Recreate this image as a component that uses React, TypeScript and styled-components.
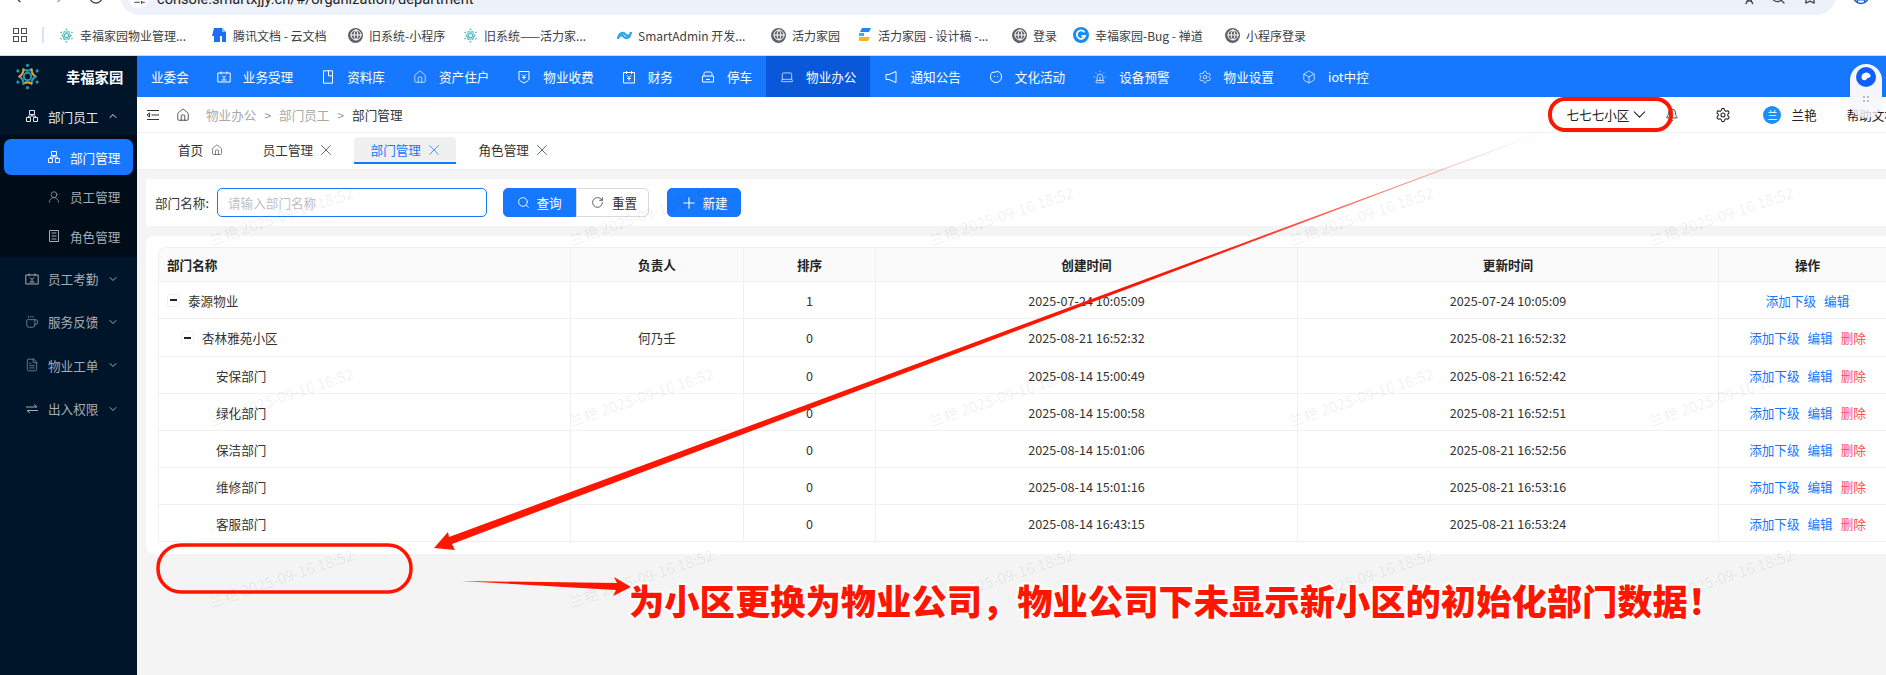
import React from "react";
import styled, { createGlobalStyle } from "styled-components";
import {
  ArrowLeft, ArrowRight, RotateCw, Search, Star, CircleUser, Globe, House, Settings, Box, Laptop, Siren, SlidersHorizontal,
  ChevronDown, ChevronUp, Bell, X, RotateCw as Reset, Plus, UserRound, Coffee, FileText, Languages,
} from "lucide-react";

const CJK = `"Noto Sans CJK SC", "Liberation Sans", sans-serif`;
const BLUE = "#1677ff";

const Global = createGlobalStyle`
  html, body { margin: 0; padding: 0; background: #fff; }
  body { font-family: ${CJK}; font-size: 12.6px; color: #222; }
  * { box-sizing: border-box; }
`;

const Page = styled.div`
  position: relative;
  width: 1886px;
  height: 675px;
  overflow: hidden;
  display: flex;
  flex-direction: column;
`;

/* browser chrome */
const BrowserBar = styled.div`
  height: 15px;
  flex: none;
  display: flex;
  align-items: flex-start;
  padding-left: 12px;
  overflow: hidden;
  color: #454746;
`;
const BrowserNav = styled.div`
  display: flex;
  gap: 22px;
  width: 108px;
  flex: none;
  margin-top: -11px;
`;
const UrlPill = styled.div`
  width: 1716px;
  height: 50px;
  margin-top: -35px;
  border-radius: 0 0 20px 20px;
  background: #edf1f9;
  display: flex;
  align-items: flex-end;
  padding: 0 18px 9px 8px;
  flex: none;
`;
const Chip = styled.span`
  width: 22px;
  height: 26px;
  border-radius: 11px;
  background: #fff;
  flex: none;
  display: flex;
  align-items: flex-end;
  justify-content: center;
  margin-bottom: -2px;
  padding-bottom: 3px;
`;
const UrlText = styled.span`
  font-family: Roboto, "Liberation Sans", sans-serif;
  font-size: 14.6px;
  line-height: 18px;
  margin-left: 7px;
  color: #1f1f1f;
  flex: 1;
  margin-bottom: -2px;
`;
const UrlTools = styled.div`
  display: flex;
  gap: 16px;
  color: #454746;
  margin-bottom: 1px;
`;
const Profile = styled.div`
  margin: -13px 0 0 16px;
  color: #1a64c8;
`;

const BookmarkBar = styled.div`
  height: 41px;
  flex: none;
  display: flex;
  align-items: center;
  border-bottom: 1px solid #d5d7da;
  padding-left: 13px;
`;
const Apps = styled.div`
  display: grid;
  grid-template-columns: 6px 6px;
  gap: 2px;
  flex: none;
`;
const AppsCell = styled.i`
  display: block;
  width: 6px;
  height: 6px;
  border: 1.4px solid #4a4a4a;
`;
const BookmarkDivider = styled.span`
  width: 2px;
  height: 16px;
  background: #d3e3fd;
  margin: 0 15px 0 15px;
  flex: none;
`;
const Bookmark = styled.div<{ $w: number }>`
  width: ${(p) => p.$w}px;
  flex: none;
  display: flex;
  align-items: center;
  gap: 6px;
  font-size: 12px;
  color: #3c4043;
  white-space: nowrap;
`;
const FavGlobe = styled.span`
  display: inline-flex;
  width: 15px;
  height: 15px;
  border-radius: 50%;
  background: #5f6368;
  color: #fff;
  align-items: center;
  justify-content: center;
  flex: none;
`;

/* shell */
const Shell = styled.div`
  flex: 1;
  display: flex;
  min-height: 0;
`;
const Sidebar = styled.aside`
  width: 137px;
  flex: none;
  background: #00152a;
  color: #a6adb4;
`;
const Brand = styled.div`
  height: 41px;
  display: flex;
  align-items: center;
  padding-left: 14px;
  gap: 25px;
  color: #fff;
  font-size: 14.3px;
  font-weight: 700;
`;
const GroupRow = styled.div<{ $open?: boolean }>`
  height: ${(p) => (p.$open ? 38 : 43.3)}px;
  display: flex;
  align-items: center;
  padding-left: 25px;
  gap: 9px;
  color: ${(p) => (p.$open ? "#e8eaec" : "#a6adb4")};
  white-space: nowrap;
`;
const GroupChevron = styled.span`
  margin-left: 0;
  display: inline-flex;
`;
const SubMenu = styled.div`
  background: #000c17;
  padding: 4px 4px 3px;
  display: flex;
  flex-direction: column;
  gap: 3.5px;
`;
const SubItem = styled.div<{ $active?: boolean }>`
  height: 36px;
  border-radius: 7px;
  display: flex;
  align-items: center;
  gap: 9px;
  padding-left: 43px;
  color: ${(p) => (p.$active ? "#fff" : "#a6adb4")};
  background: ${(p) => (p.$active ? BLUE : "transparent")};
`;

const Main = styled.main`
  flex: 1;
  min-width: 0;
  display: flex;
  flex-direction: column;
  background: #f4f4f4;
`;
const TopNav = styled.nav`
  height: 41px;
  flex: none;
  display: flex;
  background: ${BLUE};
  color: #fff;
`;
const NavItem = styled.div<{ $active?: boolean }>`
  display: flex;
  align-items: center;
  gap: 12px;
  padding: 0 14px;
  white-space: nowrap;
  background: ${(p) => (p.$active ? "#0958d9" : "transparent")};
`;
const NavIcon = styled.span`
  width: 14px;
  height: 14px;
  display: inline-flex;
  flex: none;
`;

const Crumbs = styled.div`
  height: 36px;
  flex: none;
  background: #fff;
  border-bottom: 1px solid #f0f0f0;
  display: flex;
  align-items: center;
  padding-left: 9px;
`;
const CrumbIcons = styled.div`
  display: flex;
  align-items: center;
  gap: 16px;
  margin-right: 16px;
  color: #333;
`;
const CrumbText = styled.span<{ $current?: boolean }>`
  color: ${(p) => (p.$current ? "#333" : "#a8a8a8")};
`;
const CrumbSep = styled.span`
  color: #999;
  margin: 0 8px;
  font-size: 12px;
`;
const Tools = styled.div`
  margin-left: auto;
  margin-right: -11px;
  display: flex;
  align-items: center;
  color: #222;
  white-space: nowrap;
`;
const Community = styled.div`
  display: flex;
  align-items: center;
  margin-right: 15px;
`;
const ToolGap = styled.span<{ $w: number }>`
  width: ${(p) => p.$w}px;
  flex: none;
`;
const Avatar = styled.span`
  width: 18px;
  height: 18px;
  border-radius: 50%;
  background: #1b8ff5;
  color: #fff;
  font-size: 10px;
  display: inline-flex;
  align-items: center;
  justify-content: center;
  margin-right: 10px;
`;

const Tabs = styled.div`
  height: 37px;
  flex: none;
  background: #fff;
  border-bottom: 1px solid #eee;
  display: flex;
  align-items: flex-start;
  gap: 5.5px;
  padding: 4px 0 0 24px;
`;
const Tab = styled.div<{ $active?: boolean }>`
  height: 27px;
  display: flex;
  align-items: center;
  gap: 8px;
  padding: 0 17px;
  border-radius: 4px 4px 0 0;
  color: ${(p) => (p.$active ? BLUE : "#333")};
  background: ${(p) => (p.$active ? "#f0f0f0" : "transparent")};
  border-bottom: 2px solid ${(p) => (p.$active ? BLUE : "transparent")};
  white-space: nowrap;
`;
const TabClose = styled.span`
  display: flex;
  align-items: center;
  justify-content: center;
  width: 10px;
  height: 10px;
  color: inherit;
  opacity: 0.8;
  & > svg { flex: none; }
`;

const Content = styled.div`
  flex: 1;
  min-height: 0;
  overflow: hidden;
  padding: 9px 0 0 9px;
  display: flex;
  flex-direction: column;
  gap: 10px;
`;
const SearchCard = styled.div`
  height: 47px;
  flex: none;
  background: #fff;
  display: flex;
  align-items: center;
  padding-left: 9px;
`;
const FieldLabel = styled.label`
  width: 62px;
  flex: none;
  color: #333;
`;
const FieldInput = styled.input`
  width: 270px;
  height: 29px;
  border: 1px solid ${BLUE};
  border-radius: 5px;
  outline: none;
  padding: 0 10px;
  font: inherit;
  color: #333;
  &::placeholder { color: #bfbfbf; }
`;
const ButtonGroup = styled.div`
  display: flex;
  margin-left: 16px;
`;
const Button = styled.button<{ $kind: "primary" | "plain"; $pos?: "left" | "right" }>`
  width: ${(p) => (p.$kind === "primary" && !p.$pos ? 74 : 73)}px;
  height: 29px;
  display: inline-flex;
  align-items: center;
  justify-content: center;
  gap: ${(p) => (p.$pos === "right" ? 8 : p.$pos ? 6 : 4)}px;
  padding: ${(p) => (p.$pos === "right" ? "0 0 0 3px" : "0")};
  font: inherit;
  border: 1px solid ${(p) => (p.$kind === "primary" ? BLUE : "#d9d9d9")};
  background: ${(p) => (p.$kind === "primary" ? BLUE : "#fff")};
  color: ${(p) => (p.$kind === "primary" ? "#fff" : "#333")};
  border-radius: ${(p) => (p.$pos === "left" ? "5px 0 0 5px" : p.$pos === "right" ? "0 5px 5px 0" : "5px")};
`;
const NewButton = styled(Button)`
  margin-left: 18px;
`;

const TableCard = styled.div`
  flex: none;
  background: #fff;
  border-radius: 8px 0 0 8px;
  overflow: hidden;
  padding: 11px 0 12px 12px;
`;
const Table = styled.table`
  width: 1739px;
  table-layout: fixed;
  border-collapse: separate;
  border-spacing: 0;
`;
const Th = styled.th<{ $left?: boolean }>`
  height: 35px;
  padding: 0 0 0 ${(p) => (p.$left ? 8 : 0)}px;
  background: #fafafa;
  font-weight: 700;
  color: #222;
  text-align: ${(p) => (p.$left ? "left" : "center")};
  border-top: 1px solid #f0f0f0;
  border-bottom: 1px solid #f0f0f0;
  border-right: 1px solid #f0f0f0;
  &:first-child { border-left: 1px solid #f0f0f0; border-top-left-radius: 8px; }
`;
const Tr = styled.tr<{ $tall?: boolean }>`
  height: ${(p) => (p.$tall ? 38 : 37)}px;
`;
const Td = styled.td`
  padding: 0;
  text-align: center;
  color: #333;
  border-bottom: 1px solid #f0f0f0;
  border-right: 1px solid #f0f0f0;
  &:first-child { border-left: 1px solid #f0f0f0; }
`;
const NameCell = styled.div<{ $level: number }>`
  display: flex;
  align-items: center;
  gap: 8px;
  text-align: left;
  padding-left: ${(p) => 8 + p.$level * 14}px;
`;
const Expander = styled.span`
  width: 13px;
  height: 13px;
  flex: none;
  border: 1px solid #f0f0f0;
  border-radius: 3px;
  position: relative;
  &::after {
    content: "";
    position: absolute;
    left: 2px;
    right: 2px;
    top: 4.5px;
    height: 2px;
    background: #222;
  }
`;
const LeafSpacer = styled.span`
  width: 13px;
  flex: none;
`;
const Actions = styled.div`
  display: flex;
  justify-content: center;
  gap: 8px;
`;
const ActionLink = styled.a<{ $danger?: boolean }>`
  color: ${(p) => (p.$danger ? "#ff4d4f" : BLUE)};
  text-decoration: none;
`;

/* overlays */
const FloatWidget = styled.div`
  position: absolute;
  left: 1850px;
  top: 64px;
  width: 32px;
  height: 54px;
  border-radius: 16px;
  background: linear-gradient(180deg, #f6f7fc 0 60%, rgba(246, 247, 252, 0.75) 100%);
  box-shadow: 0 1px 3px rgba(0, 0, 0, 0.06);
  display: flex;
  flex-direction: column;
  align-items: center;
  padding-top: 3px;
  z-index: 6;
`;
const DragDots = styled.div`
  display: grid;
  grid-template-columns: 2px 2px;
  gap: 2px;
  margin-top: 9px;
`;
const DragDot = styled.i`
  width: 2px;
  height: 2px;
  background: #bbb;
`;
const Watermarks = styled.div`
  position: absolute;
  left: 101px;
  top: 125px;
  display: grid;
  grid-template-columns: repeat(5, 360px);
  grid-auto-rows: 181px;
  pointer-events: none;
  z-index: 4;
`;
const Mark = styled.div`
  display: flex;
  align-items: center;
  justify-content: center;
  transform: rotate(-18.5deg);
  font-size: 15px;
  color: rgba(0, 0, 0, 0.07);
  white-space: nowrap;
`;
const Annotations = styled.svg`
  position: absolute;
  left: 0;
  top: 0;
  z-index: 5;
  pointer-events: none;
`;
const Callout = styled.div`
  position: absolute;
  left: 629px;
  top: 577px;
  z-index: 5;
  font-size: 35.3px;
  line-height: 46px;
  font-weight: 900;
  color: #ff1500;
  white-space: nowrap;
  -webkit-text-stroke: 4px #fff;
  paint-order: stroke fill;
`;

/* drawings */
const Flower = ({ size, pale }: { size: number; pale?: boolean }) => {
  const teal = pale ? "#4fb6c4" : "#1f9dac";
  const gold = pale ? "#7ec9b8" : "#d9a233";
  const angles = [0, 60, 120, 180, 240, 300];
  return (
    <svg width={size} height={size} viewBox="0 0 40 40" style={{ flex: "none" }}>
      <circle cx="20" cy="20" r="5.5" fill="none" stroke={teal} strokeWidth="3" />
      {angles.map((a, i) => (
        <g key={a} transform={`rotate(${a} 20 20)`}>
          <path d="M14 9.5 Q20 13 26 9.5" fill="none" stroke={i % 2 ? gold : teal} strokeWidth="3.2" strokeLinecap="round" />
          <circle cx="20" cy="3.5" r="2.3" fill={teal} />
        </g>
      ))}
    </svg>
  );
};

const Thin = ({ d }: { d: string }) => (
  <svg width="14" height="14" viewBox="0 0 14 14" fill="none" stroke="currentColor" strokeWidth="1" style={{ flex: "none" }}>
    <path d={d} />
  </svg>
);
const navPaths: Record<string, string> = {
  business: "M.8 3h12.400v9H.8zM4 1.500V4M10 1.500V4M5 5.500l2 2 2-2M7 7.500v2M4.500 10h5",
  library: "M2.500 .8h9v12.400h-9zM7.500 .8v5h4",
  fee: "M2 1.500h10v7.500c0 1.500-3 3-5 4-2-1-5-2.500-5-4zM5 4.500l2 2 2-2M7 6.500v3M5.200 7.500h3.600",
  finance: "M1.500 2.500h11v10.500h-11zM4.500 1v3M9.500 1v3M5 5.500l2 2 2-2M7 7.500v3M5.200 8.500h3.600",
  park: "M3 6V3.500C3 2.500 3.800 2 4.500 2h5c.8 0 1.500.5 1.500 1.500V6M1.500 6h11v6h-11zM5 9.500h4",
  culture: "M3 2.500 9 1.500c2.500 1 3.500 3 3.500 5.500a5.500 5.500 0 0 1-11 0c0-1.800.5-3.500 1.500-4.500zM5.500 6v.8M8.500 6v.8",
  notice: "M12 1.500v11L5 9.500H2v-5h3z",
  org: "M4.500 1.500h5v4h-5zM1.500 8.500h4v4h-4zM8.500 8.500h4v4h-4zM7 5.500v1.500M3.500 8.500V7h7v1.500",
  role: "M2.500 1.500h9v11h-9zM4.500 4h5M4.500 7h5M4.500 10h5",
  fold: "M1 2.500h12M5.500 7H13M1 11.500h12M3.500 5 1 7l2.500 2z",
  swap: "M1 5h11L9 2.500M13 8.500H2L5 11",
};

const navItems = [
  { label: "业委会" },
  { label: "业务受理", path: "business" },
  { label: "资料库", path: "library" },
  { label: "资产住户", icon: <House size={14} strokeWidth={1.2} /> },
  { label: "物业收费", path: "fee" },
  { label: "财务", path: "finance" },
  { label: "停车", path: "park" },
  { label: "物业办公", icon: <Laptop size={14} strokeWidth={1.2} />, active: true },
  { label: "通知公告", path: "notice" },
  { label: "文化活动", path: "culture" },
  { label: "设备预警", icon: <Siren size={14} strokeWidth={1.2} /> },
  { label: "物业设置", icon: <Settings size={14} strokeWidth={1.2} /> },
  { label: "iot中控", icon: <Box size={14} strokeWidth={1.2} /> },
];

const G = () => (
  <FavGlobe>
    <Globe size={12} strokeWidth={2} />
  </FavGlobe>
);
const bookmarks: { w: number; text: string; icon: React.ReactNode }[] = [
  { w: 153, text: "幸福家园物业管理...", icon: <Flower size={15} pale /> },
  {
    w: 136,
    text: "腾讯文档 - 云文档",
    icon: (
      <svg width="15" height="16" viewBox="0 0 15 16">
        <path d="M2 1h8l4 4v10h-4V9H8v6H2V9H0z" fill="#1b6ff0" />
        <path d="M10 1l4 4h-4z" fill="#8fc0ff" />
      </svg>
    ),
  },
  { w: 115, text: "旧系统-小程序", icon: <G /> },
  { w: 154, text: "旧系统——活力家...", icon: <Flower size={15} pale /> },
  {
    w: 154,
    text: "SmartAdmin 开发...",
    icon: (
      <svg width="15" height="15" viewBox="0 0 15 15" fill="none" stroke="#2fa8e8" strokeWidth="2.400">
        <path d="M2 9c0-4 4-5 6-3l1 1c2 2 5 0 5-3M13 6c0 4-4 5-6 3L6 8C4 6 1 8 1 11" />
      </svg>
    ),
  },
  { w: 87, text: "活力家园", icon: <G /> },
  {
    w: 154,
    text: "活力家园 - 设计稿 -...",
    icon: (
      <svg width="14" height="16" viewBox="0 0 14 16">
        <path d="M4 1h9l-2 4H2z" fill="#2484f2" />
        <path d="M1 6h5v3H1z" fill="#2bb4f0" />
        <path d="M1 10h11l-2 4H1z" fill="#f8b51d" />
      </svg>
    ),
  },
  { w: 61, text: "登录", icon: <G /> },
  {
    w: 152,
    text: "幸福家园-Bug - 禅道",
    icon: (
      <svg width="16" height="16" viewBox="0 0 16 16">
        <circle cx="8" cy="8" r="8" fill="#1a8cf0" />
        <path d="M11.500 5.200A4.200 4.200 0 1 0 12 9H8.500" fill="none" stroke="#fff" strokeWidth="1.800" />
      </svg>
    ),
  },
  { w: 100, text: "小程序登录", icon: <G /> },
];

const rows = [
  { name: "泰源物业", level: 0, fold: true, owner: "", sort: 1, created: "2025-07-24 10:05:09", updated: "2025-07-24 10:05:09", del: false },
  { name: "杏林雅苑小区", level: 1, fold: true, owner: "何乃壬", sort: 0, created: "2025-08-21 16:52:32", updated: "2025-08-21 16:52:32", del: true, tall: true },
  { name: "安保部门", level: 2, owner: "", sort: 0, created: "2025-08-14 15:00:49", updated: "2025-08-21 16:52:42", del: true },
  { name: "绿化部门", level: 2, owner: "", sort: 0, created: "2025-08-14 15:00:58", updated: "2025-08-21 16:52:51", del: true },
  { name: "保洁部门", level: 2, owner: "", sort: 0, created: "2025-08-14 15:01:06", updated: "2025-08-21 16:52:56", del: true },
  { name: "维修部门", level: 2, owner: "", sort: 0, created: "2025-08-14 15:01:16", updated: "2025-08-21 16:53:16", del: true },
  { name: "客服部门", level: 2, owner: "", sort: 0, created: "2025-08-14 16:43:15", updated: "2025-08-21 16:53:24", del: true },
];

const groups: { label: string; icon: React.ReactNode }[] = [
  { label: "员工考勤", icon: <Thin d={navPaths.business} /> },
  { label: "服务反馈", icon: <Coffee size={14} strokeWidth={1.1} /> },
  { label: "物业工单", icon: <FileText size={14} strokeWidth={1.1} /> },
  { label: "出入权限", icon: <Thin d={navPaths.swap} /> },
];

const marks = Array.from({ length: 15 }, (_, i) => i);

const CloseIcon = () => (
  <TabClose>
    <X size={18} strokeWidth={1.2} />
  </TabClose>
);

export default function App() {
  return (
    <>
      <Global />
      <Page>
        <BrowserBar>
          <BrowserNav>
            <ArrowLeft size={16} />
            <ArrowRight size={16} color="#9aa0a6" />
            <RotateCw size={16} />
          </BrowserNav>
          <UrlPill>
            <Chip>
              <SlidersHorizontal size={13} />
            </Chip>
            <UrlText>console.smartxjjy.cn/#/organization/department</UrlText>
            <UrlTools>
              <Languages size={16} />
              <Search size={16} />
              <Star size={16} />
            </UrlTools>
          </UrlPill>
          <Profile>
            <CircleUser size={18} />
          </Profile>
        </BrowserBar>
        <BookmarkBar>
          <Apps>
            <AppsCell />
            <AppsCell />
            <AppsCell />
            <AppsCell />
          </Apps>
          <BookmarkDivider />
          {bookmarks.map((b) => (
            <Bookmark key={b.text} $w={b.w}>
              {b.icon}
              {b.text}
            </Bookmark>
          ))}
        </BookmarkBar>
        <Shell>
          <Sidebar>
            <Brand>
              <Flower size={27} />
              幸福家园
            </Brand>
            <GroupRow $open>
              <Thin d={navPaths.org} />
              部门员工
              <GroupChevron>
                <ChevronUp size={12} />
              </GroupChevron>
            </GroupRow>
            <SubMenu>
              <SubItem $active>
                <Thin d={navPaths.org} />
                部门管理
              </SubItem>
              <SubItem>
                <UserRound size={14} strokeWidth={1.2} />
                员工管理
              </SubItem>
              <SubItem>
                <Thin d={navPaths.role} />
                角色管理
              </SubItem>
            </SubMenu>
            {groups.map((g) => (
              <GroupRow key={g.label}>
                {g.icon}
                {g.label}
                <GroupChevron>
                  <ChevronDown size={12} />
                </GroupChevron>
              </GroupRow>
            ))}
          </Sidebar>
          <Main>
            <TopNav>
              {navItems.map((n) => (
                <NavItem key={n.label} $active={n.active}>
                  {n.path ? (
                    <NavIcon>
                      <Thin d={navPaths[n.path]} />
                    </NavIcon>
                  ) : n.icon ? (
                    <NavIcon>{n.icon}</NavIcon>
                  ) : null}
                  {n.label}
                </NavItem>
              ))}
            </TopNav>
            <Crumbs>
              <CrumbIcons>
                <Thin d={navPaths.fold} />
                <House size={14} strokeWidth={1.4} />
              </CrumbIcons>
              <CrumbText>物业办公</CrumbText>
              <CrumbSep>&gt;</CrumbSep>
              <CrumbText>部门员工</CrumbText>
              <CrumbSep>&gt;</CrumbSep>
              <CrumbText $current>部门管理</CrumbText>
              <Tools>
                <Community>
                  七七七小区
                  <ChevronDown size={21} strokeWidth={1.2} />
                </Community>
                <Bell size={14} strokeWidth={1.4} />
                <ToolGap $w={36} />
                <Settings size={16} strokeWidth={1.6} />
                <ToolGap $w={32} />
                <Avatar>兰</Avatar>
                兰艳
                <ToolGap $w={30} />
                帮助文档
              </Tools>
            </Crumbs>
            <Tabs>
              <Tab>
                首页
                <House size={12} strokeWidth={1.2} />
              </Tab>
              <Tab>
                员工管理
                <CloseIcon />
              </Tab>
              <Tab $active>
                部门管理
                <CloseIcon />
              </Tab>
              <Tab>
                角色管理
                <CloseIcon />
              </Tab>
            </Tabs>
            <Content>
              <SearchCard>
                <FieldLabel>部门名称:</FieldLabel>
                <FieldInput placeholder="请输入部门名称" />
                <ButtonGroup>
                  <Button $kind="primary" $pos="left">
                    <Search size={13} strokeWidth={1.6} />
                    查询
                  </Button>
                  <Button $kind="plain" $pos="right">
                    <Reset size={13} strokeWidth={1.4} />
                    重置
                  </Button>
                </ButtonGroup>
                <NewButton $kind="primary">
                  <Plus size={18} strokeWidth={1.5} />
                  新建
                </NewButton>
              </SearchCard>
              <TableCard>
                <Table>
                  <colgroup>
                    <col width={413} />
                    <col width={173} />
                    <col width={132} />
                    <col width={422} />
                    <col width={421} />
                    <col width={178} />
                  </colgroup>
                  <thead>
                    <tr>
                      <Th $left>部门名称</Th>
                      <Th>负责人</Th>
                      <Th>排序</Th>
                      <Th>创建时间</Th>
                      <Th>更新时间</Th>
                      <Th>操作</Th>
                    </tr>
                  </thead>
                  <tbody>
                    {rows.map((r) => (
                      <Tr key={r.name} $tall={r.tall}>
                        <Td>
                          <NameCell $level={r.level}>
                            {r.fold ? <Expander /> : <LeafSpacer />}
                            {r.name}
                          </NameCell>
                        </Td>
                        <Td>{r.owner}</Td>
                        <Td>{r.sort}</Td>
                        <Td>{r.created}</Td>
                        <Td>{r.updated}</Td>
                        <Td>
                          <Actions>
                            <ActionLink>添加下级</ActionLink>
                            <ActionLink>编辑</ActionLink>
                            {r.del && <ActionLink $danger>删除</ActionLink>}
                          </Actions>
                        </Td>
                      </Tr>
                    ))}
                  </tbody>
                </Table>
              </TableCard>
            </Content>
          </Main>
        </Shell>

        <Watermarks>
          {marks.map((m) => (
            <Mark key={m}>兰艳 2025-09-16 18:52</Mark>
          ))}
        </Watermarks>

        <FloatWidget>
          <svg width="20" height="20" viewBox="0 0 20 20">
            <circle cx="10" cy="10" r="10" fill="#0f5fff" />
            <path d="M5.500 10.500a4.800 4.800 0 0 1 9-2.500c.6 1.600-1 3-2.500 3-1.600 0-1.500 2.500-3.500 2.300-1.800-.2-3-1.300-3-2.800z" fill="#fff" />
          </svg>
          <DragDots>
            <DragDot />
            <DragDot />
            <DragDot />
            <DragDot />
          </DragDots>
        </FloatWidget>

        <Annotations width="1886" height="675" viewBox="0 0 1886 675">
          <defs>
            <linearGradient id="fade" gradientUnits="userSpaceOnUse" x1="1543" y1="132" x2="1200" y2="262">
              <stop offset="0" stopColor="#ff1500" stopOpacity="0.15" />
              <stop offset="1" stopColor="#ff1500" />
            </linearGradient>
          </defs>
          <rect x="1550" y="99" width="121" height="31" rx="15" fill="none" stroke="#ff1500" strokeWidth="4" />
          <polygon points="1543,132 449,537 448,532 434,548 455,550 452,544" fill="url(#fade)" />
          <rect x="158" y="545" width="253" height="47" rx="23" fill="none" stroke="#ff1500" strokeWidth="3.500" />
          <polygon points="461,581 617,583 614,577 631,587 613,596 616,590" fill="#ff1500" />
        </Annotations>
        <Callout>为小区更换为物业公司，物业公司下未显示新小区的初始化部门数据！</Callout>
      </Page>
    </>
  );
}
